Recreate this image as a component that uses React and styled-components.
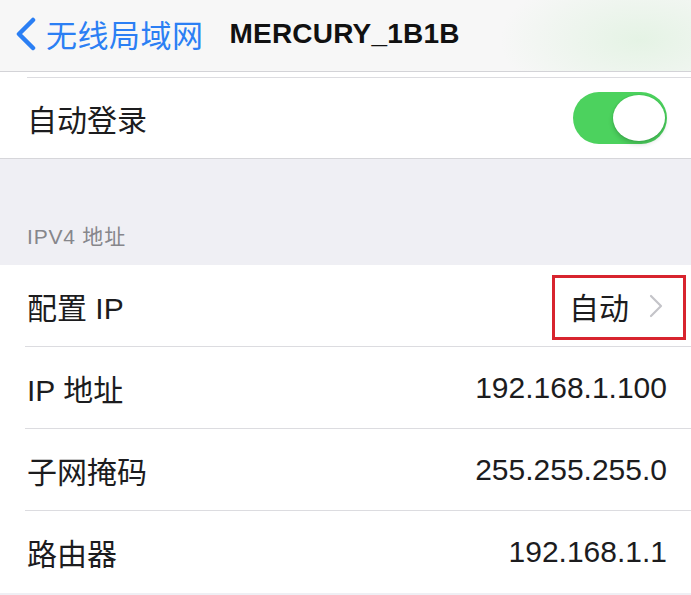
import React from "react";
import styled, { createGlobalStyle } from "styled-components";

const GlobalStyle = createGlobalStyle`
  html, body {
    margin: 0;
    padding: 0;
    background: #ffffff;
  }
  body {
    font-family: "Liberation Sans", "Noto Sans CJK SC", sans-serif;
    color: #1c1c1e;
  }
  * {
    box-sizing: border-box;
  }
`;

const Screen = styled.div`
  width: 691px;
  height: 595px;
  overflow: hidden;
  background: #efeff4;
`;

const NavBar = styled.header`
  display: flex;
  align-items: center;
  height: 72px;
  padding: 0 0 4px 14px;
  border-bottom: 1px solid #d3d3d7;
  background:
    radial-gradient(ellipse 140px 70px at 640px 40px, rgba(214, 240, 214, 0.55), rgba(247, 247, 247, 0) 100%),
    #f7f7f7;
`;

const BackButton = styled.div`
  display: flex;
  align-items: center;
  gap: 8px;
  color: #2b7ff4;
  font-size: 31px;
  font-family: "Noto Sans CJK SC", sans-serif;
  letter-spacing: 0.5px;

  & svg {
    display: block;
  }
`;

const Title = styled.div`
  margin-left: 26px;
  font-size: 28px;
  font-weight: 700;
  color: #111111;
  letter-spacing: 0.2px;
`;

const Group = styled.section`
  background: #ffffff;
  border-bottom: ${(p) => (p.$closed ? "1px solid #d6d6da" : "none")};
`;

const Peek = styled.div`
  height: 6px;
  margin-left: 27px;
  border-bottom: 1px solid #dcdce0;
`;

const Row = styled.div`
  padding-left: 25px;
`;

const RowInner = styled.div`
  display: flex;
  align-items: center;
  justify-content: space-between;
  height: ${(p) => p.$height || 82}px;
  padding: 0 24px 0 2px;
  border-bottom: ${(p) => (p.$last ? "none" : "1px solid #dcdce0")};
`;

const Label = styled.span`
  font-size: 30px;
  color: #1c1c1e;
`;

const Value = styled.span`
  position: relative;
  display: flex;
  align-items: center;
  gap: 20px;
  font-size: 30px;
  color: #1c1c1e;
`;

const Highlight = styled.span`
  position: absolute;
  top: -9px;
  bottom: -12px;
  left: -17px;
  right: -19px;
  border: 3px solid #d8242e;
  pointer-events: none;
`;

const Switch = styled.div`
  position: relative;
  width: 94px;
  height: 52px;
  border-radius: 26px;
  background: #4cd25e;
`;

const Knob = styled.div`
  position: absolute;
  top: 3px;
  right: 2px;
  width: 52px;
  height: 46px;
  border-radius: 50%;
  background: #ffffff;
  box-shadow: 0 3px 5px rgba(0, 0, 0, 0.18), 0 0 0 1px rgba(40, 160, 60, 0.15);
`;

const SectionHeader = styled.div`
  display: flex;
  align-items: flex-end;
  height: 106px;
  padding: 0 0 15px 27px;
  font-size: 21px;
  letter-spacing: 0.8px;
  color: #86868b;
`;

const ChevronSlot = styled.span`
  display: flex;
  margin-right: 4px;
`;

const BackChevron = () => (
  <svg width="24" height="34" viewBox="0 0 24 34" fill="none">
    <polyline
      points="19,3 5,17 19,31"
      stroke="#2b7ff4"
      strokeWidth="4.5"
      strokeLinecap="round"
      strokeLinejoin="round"
    />
  </svg>
);

const Disclosure = () => (
  <ChevronSlot>
    <svg width="14" height="24" viewBox="0 0 14 24" fill="none">
      <polyline
        points="2,2 12,12 2,22"
        stroke="#c4c4c9"
        strokeWidth="2.2"
        strokeLinecap="round"
        strokeLinejoin="round"
      />
    </svg>
  </ChevronSlot>
);

const ipRows = [
  { label: "IP 地址", value: "192.168.1.100" },
  { label: "子网掩码", value: "255.255.255.0" },
  { label: "路由器", value: "192.168.1.1" },
];

export default function App() {
  return (
    <>
      <GlobalStyle />
      <Screen>
        <NavBar>
          <BackButton>
            <BackChevron />
            无线局域网
          </BackButton>
          <Title>MERCURY_1B1B</Title>
        </NavBar>

        <Group $closed>
          <Peek />
          <Row>
            <RowInner $height={80} $last>
              <Label>自动登录</Label>
              <Switch>
                <Knob />
              </Switch>
            </RowInner>
          </Row>
        </Group>

        <SectionHeader>IPV4 地址</SectionHeader>

        <Group>
          <Row>
            <RowInner>
              <Label>配置 IP</Label>
              <Value>
                自动
                <Disclosure />
                <Highlight />
              </Value>
            </RowInner>
          </Row>
          {ipRows.map((r, i) => (
            <Row key={r.label}>
              <RowInner $last={i === ipRows.length - 1}>
                <Label>{r.label}</Label>
                <Value>{r.value}</Value>
              </RowInner>
            </Row>
          ))}
        </Group>
      </Screen>
    </>
  );
}
